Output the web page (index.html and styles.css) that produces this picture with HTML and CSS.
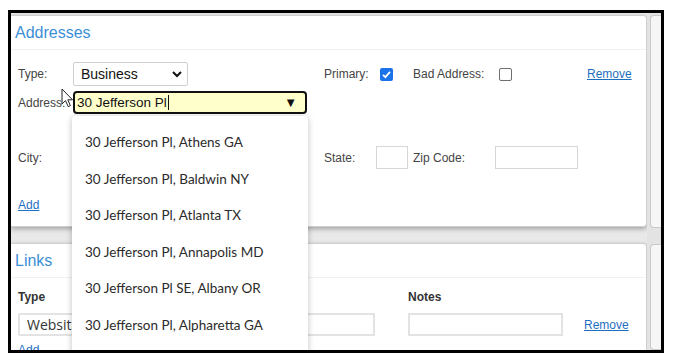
FILE: index.html
```html
<!DOCTYPE html>
<html lang="en">
<head>
    <meta charset="UTF-8">
    <title>Addresses</title>
    <link rel="stylesheet" href="styles.css">
</head>
<body>
    <div class="frame">
        <div class="main">
            <!-- Adresler -->
            <div class="card card-addr">
                <div class="card-header">Addresses</div>
                <div class="card-body">
                    <div class="row row-type">
                        <span class="label">Type:</span>
                        <div class="select select-type">
                            <span>Business</span>
                            <svg width="10" height="7" viewBox="0 0 10 7"><polyline points="1,1 5,5 9,1" fill="none" stroke="#111" stroke-width="2"/></svg>
                        </div>
                        <span class="label">Primary:</span>
                        <span class="check checked">
                            <svg width="13" height="13" viewBox="0 0 13 13"><rect width="13" height="13" rx="2" fill="#1a73e8"/><polyline points="3,6.8 5.4,9.2 10,3.8" fill="none" stroke="#fff" stroke-width="1.8"/></svg>
                        </span>
                        <span class="label">Bad Address:</span>
                        <span class="check"></span>
                        <a href="#" class="link">Remove</a>
                    </div>
                    <div class="row row-address">
                        <span class="label">Address:</span>
                        <div class="combo">
                            <span class="combo-text">30 Jefferson Pl</span><span class="caret"></span>
                            <span class="combo-arrow">&#9660;</span>
                        </div>
                    </div>
                    <div class="row row-city">
                        <span class="label">City:</span>
                        <div class="input input-city"></div>
                        <span class="label">State:</span>
                        <div class="input input-state"></div>
                        <span class="label">Zip Code:</span>
                        <div class="input input-zip"></div>
                    </div>
                    <div class="row-add"><a href="#" class="link">Add</a></div>
                </div>
            </div>

            <!-- Linkler -->
            <div class="card card-links">
                <div class="card-header">Links</div>
                <div class="card-body links-body">
                    <div class="links-grid">
                        <span class="head">Type</span>
                        <span></span>
                        <span class="head">Notes</span>
                        <span></span>
                        <div class="select select-web"><span>Website</span></div>
                        <div class="input input-url"></div>
                        <div class="input input-notes"></div>
                        <a href="#" class="link">Remove</a>
                    </div>
                    <div class="row-add links-add"><a href="#" class="link">Add</a></div>
                </div>
            </div>
        </div>

        <div class="side">
            <div class="peek peek-top"></div>
            <div class="peek peek-bottom"></div>
        </div>

        <ul class="suggest">
            <li>30 Jefferson Pl, Athens GA</li>
            <li>30 Jefferson Pl, Baldwin NY</li>
            <li>30 Jefferson Pl, Atlanta TX</li>
            <li>30 Jefferson Pl, Annapolis MD</li>
            <li>30 Jefferson Pl SE, Albany OR</li>
            <li>30 Jefferson Pl, Alpharetta GA</li>
        </ul>

        <svg class="pointer" width="13" height="20" viewBox="0 0 13 20">
            <path d="M1 1 L1 16 L4.5 12.6 L7.2 18.6 L9.4 17.6 L6.8 11.8 L11.5 11.8 Z" fill="#fff" stroke="#222" stroke-width="1" stroke-linejoin="round"/>
        </svg>
    </div>
</body>
</html>
```

FILE: styles.css
```css
body {
    margin: 0;
    background: #fff;
    font-family: "Liberation Sans", Arial, sans-serif;
    font-size: 12px;
    color: #444;
}
.frame {
    position: relative;
    margin: 10px 0 0 8px;
    width: 650px;
    height: 337px;
    border: 3px solid #000;
    background: #e9e9e9;
    overflow: hidden;
    display: flex;
}
.main {
    width: 636px;
    padding-top: 2px;
    display: flex;
    flex-direction: column;
    gap: 16px;
}
.card {
    background: #fff;
    border: 1px solid #cfcfcf;
    border-left: none;
    border-radius: 0 4px 4px 0;
    box-shadow: 0 2px 5px rgba(0,0,0,0.3);
}
.card-header {
    height: 33px;
    line-height: 34px;
    padding-left: 4px;
    font-size: 16px;
    color: #3b8fd6;
    border-bottom: 1px solid #f1f1f1;
}
.card-body {
    padding: 12px 0 14px 7px;
}
.row {
    display: grid;
    grid-template-columns: 55px 251px 52px 37px 82px 92px auto;
    align-items: center;
}
.row-type { height: 24px; }
.row-address { height: 23px; margin-top: 5px; }
.row-city { height: 23px; margin-top: 32px; }
.row-add { margin-top: 29px; line-height: 14px; }
.label {
    color: #444;
    white-space: nowrap;
}
.link {
    color: #1f6fbf;
    text-decoration: underline;
}
.select {
    box-sizing: border-box;
    height: 24px;
    border: 1px solid #cfcfcf;
    border-radius: 2px;
    display: flex;
    align-items: center;
    justify-content: space-between;
    padding: 0 5px 0 7px;
    font-size: 14px;
    color: #111;
    background: #fff;
}
.select-type { width: 115px; }
.check {
    box-sizing: border-box;
    width: 13px;
    height: 13px;
    margin-left: 4px;
    border: 1px solid #6f6f6f;
    border-radius: 2px;
    display: block;
}
.check.checked { border: none; }
.check svg { display: block; }
.combo {
    grid-column: 2 / 4;
    box-sizing: border-box;
    width: 234px;
    height: 23px;
    border: 2px solid #111;
    border-radius: 4px;
    background: #ffffcc;
    display: flex;
    align-items: center;
    padding: 0 8px 0 2px;
    font-size: 13.5px;
    color: #111;
}
.caret {
    width: 1px;
    height: 15px;
    background: #111;
    margin-left: 1px;
}
.combo-arrow {
    margin-left: auto;
    font-size: 13px;
}
.input {
    box-sizing: border-box;
    height: 23px;
    border: 1px solid #d6d6d6;
    background: #fff;
}
.input-city { width: 230px; }
.input-state { width: 32px; }
.input-zip { width: 83px; }

.links-body { padding-bottom: 20px; }
.links-grid {
    display: grid;
    grid-template-columns: 137px 253px 176px auto;
    grid-template-rows: 14px 23px;
    row-gap: 9px;
    align-items: center;
}
.head {
    font-weight: bold;
    color: #333;
}
.select-web {
    width: 127px;
    height: 23px;
    border-width: 2px;
    border-color: #e3e3e3;
    font-family: "Open Sans", sans-serif;
    font-size: 14px;
    color: #333;
}
.input-url { width: 220px; border-width: 2px; border-color: #e3e3e3; }
.input-notes { width: 155px; border-width: 2px; border-color: #e3e3e3; }
.links-add { margin-top: 7px; }

.side {
    flex: 1;
    display: flex;
    flex-direction: column;
    gap: 16px;
    padding: 2px 0 0 3px;
    background: #e3e3e3;
}
.peek {
    background: #f6f6f6;
    border: 1px solid #c9c9c9;
    border-right: none;
    border-radius: 4px 0 0 4px;
}
.peek-top { height: 211px; }
.peek-bottom { flex: 1; }

.suggest {
    position: absolute;
    left: 61px;
    top: 103px;
    width: 236px;
    height: 260px;
    margin: 0;
    padding: 8px 0 0;
    list-style: none;
    background: #fff;
    border-radius: 4px;
    box-shadow: 0 1px 6px rgba(0,0,0,0.25);
    font-family: Lato, sans-serif;
    font-size: 13.5px;
    color: #2b2b2b;
}
.suggest li {
    height: 36.5px;
    line-height: 36.5px;
    padding-left: 13px;
}
.pointer {
    position: absolute;
    left: 50px;
    top: 75px;
}
```
